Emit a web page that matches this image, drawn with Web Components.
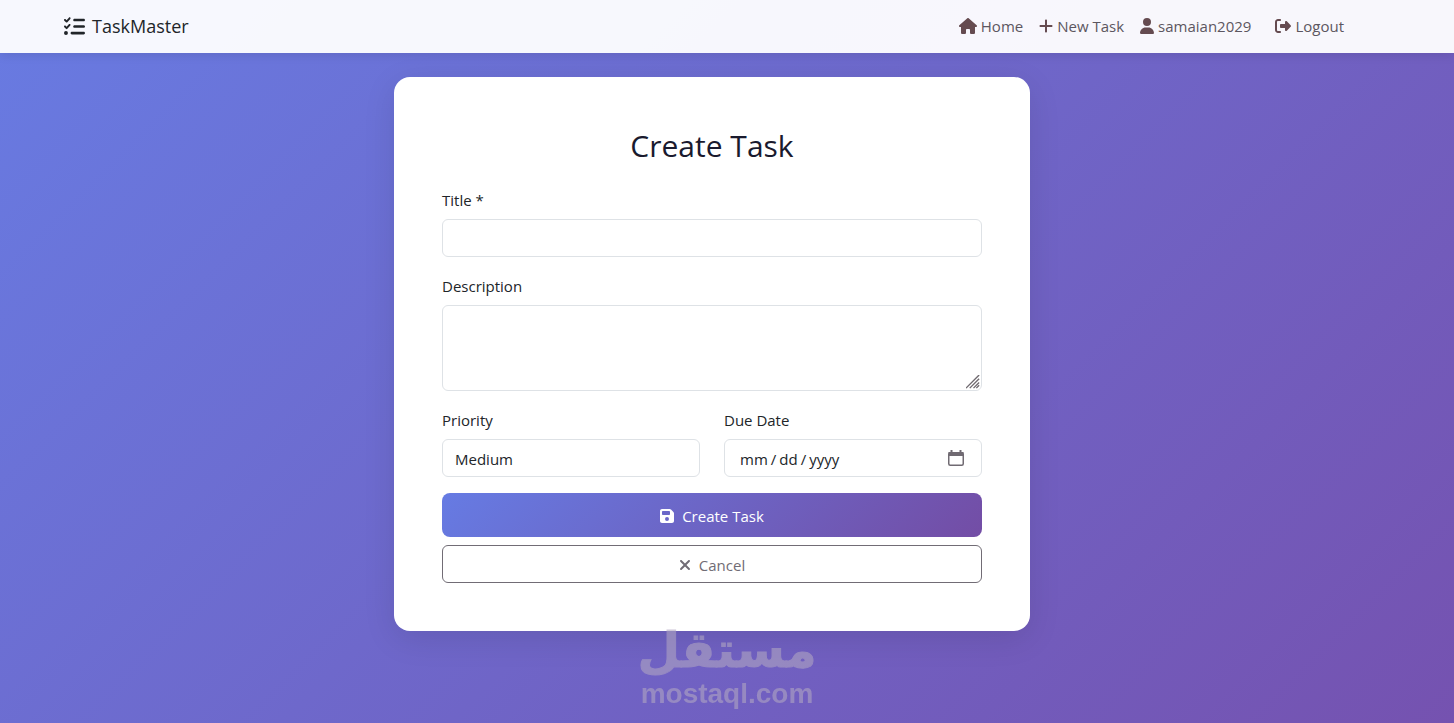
<!DOCTYPE html>
<html lang="en">
<head>
  <meta charset="utf-8">
  <meta name="viewport" content="width=device-width, initial-scale=1">
  <title>Create Task - TaskMaster</title>
  <style>
    body {
      margin: 0;
      min-height: 100vh;
      background: linear-gradient(135deg, #687be2 0%, #7552b0 100%) fixed;
      font-family: "Open Sans", "Noto Sans", sans-serif;
      font-size: 15px;
      line-height: 24px;
      color: #212529;
    }
    main {
      padding: 24px 42px 24px 12px;
    }
  </style>
</head>
<body>
  <site-navbar>
    <nav-link icon="house" href="#home">Home</nav-link>
    <nav-link icon="plus" href="#new">New Task</nav-link>
    <nav-link icon="user" href="#profile">samaian2029</nav-link>
    <nav-link icon="logout" href="#logout" style="margin-left: 8px">Logout</nav-link>
  </site-navbar>
  <main>
    <task-card heading="Create Task">
      <task-form></task-form>
    </task-card>
  </main>
  <mostaql-mark></mostaql-mark>

  <script>
    const ICONS = {
      house: [576, "M575.8 255.5c0 18-15 32.1-32 32.1h-32l.7 160.2c0 2.7-.2 5.4-.5 8.1V472c0 22.1-17.9 40-40 40H456c-1.1 0-2.2 0-3.3-.1c-1.4 .1-2.8 .1-4.2 .1H416 392c-22.1 0-40-17.9-40-40V448 384c0-17.7-14.3-32-32-32H256c-17.7 0-32 14.3-32 32v64 24c0 22.1-17.9 40-40 40H160 128.1c-1.5 0-3-.1-4.5-.2c-1.2 .1-2.4 .2-3.6 .2H104c-22.1 0-40-17.9-40-40V360c0-.9 0-1.9 .1-2.8V287.6H32c-18 0-32-14-32-32.1c0-9 3-17 10-24L266.4 8c7-7 15-8 22-8s15 2 21 7L564.8 231.5c8 7 12 15 11 24z"],
      plus: [448, "M256 80c0-17.7-14.3-32-32-32s-32 14.3-32 32V224H48c-17.7 0-32 14.3-32 32s14.3 32 32 32H192V432c0 17.7 14.3 32 32 32s32-14.3 32-32V288H400c17.7 0 32-14.3 32-32s-14.3-32-32-32H256V80z"],
      user: [448, "M224 256A128 128 0 1 0 224 0a128 128 0 1 0 0 256zm-45.7 48C79.8 304 0 383.8 0 482.3C0 498.7 13.3 512 29.7 512H418.3c16.4 0 29.7-13.3 29.7-29.7C448 383.8 368.2 304 269.7 304H178.3z"],
      logout: [512, "M377.9 105.9L500.7 228.7c7.2 7.2 11.3 17.1 11.3 27.3s-4.1 20.1-11.3 27.3L377.9 406.1c-6.4 6.4-15 9.9-24 9.9c-18.7 0-33.9-15.2-33.9-33.9l0-62.1-128 0c-17.7 0-32-14.3-32-32l0-64c0-17.7 14.3-32 32-32l128 0 0-62.1c0-18.7 15.2-33.9 33.9-33.9c9 0 17.6 3.6 24 9.9zM160 96L96 96c-17.7 0-32 14.3-32 32l0 256c0 17.7 14.3 32 32 32l64 0c17.7 0 32 14.3 32 32s-14.3 32-32 32l-64 0c-53 0-96-43-96-96L0 128C0 75 43 32 96 32l64 0c17.7 0 32 14.3 32 32s-14.3 32-32 32z"],
      save: [448, "M64 32C28.7 32 0 60.7 0 96V416c0 35.3 28.7 64 64 64H384c35.3 0 64-28.7 64-64V173.3c0-17-6.7-33.3-18.7-45.3L352 50.7C340 38.7 323.7 32 306.7 32H64zm0 96c0-17.7 14.3-32 32-32H288c17.7 0 32 14.3 32 32v64c0 17.7-14.3 32-32 32H96c-17.7 0-32-14.3-32-32V128zM224 288a64 64 0 1 1 0 128 64 64 0 1 1 0-128z"],
      times: [384, "M342.6 150.6c12.5-12.5 12.5-32.8 0-45.3s-32.8-12.5-45.3 0L192 210.7 86.6 105.4c-12.5-12.5-32.8-12.5-45.3 0s-12.5 32.8 0 45.3L146.7 256 41.4 361.4c-12.5 12.5-12.5 32.8 0 45.3s32.8 12.5 45.3 0L192 301.3 297.4 406.6c12.5 12.5 32.8 12.5 45.3 0s12.5-32.8 0-45.3L237.3 256 342.6 150.6z"],
      tasks: [512, "M152.1 38.2c9.9 8.9 10.7 24 1.8 33.9l-72 80c-4.4 4.9-10.6 7.8-17.2 7.9s-12.9-2.4-17.6-7L7 113C-2.3 103.6-2.3 88.4 7 79s24.6-9.4 33.9 0l22.1 22.1 55.1-61.2c8.9-9.9 24-10.7 33.9-1.8zm0 160c9.9 8.9 10.7 24 1.8 33.9l-72 80c-4.4 4.9-10.6 7.8-17.2 7.9s-12.9-2.4-17.6-7L7 273c-9.4-9.4-9.4-24.6 0-33.9s24.6-9.4 33.9 0l22.1 22.1 55.1-61.2c8.9-9.9 24-10.7 33.9-1.8zM224 96c0-17.7 14.3-32 32-32H480c17.7 0 32 14.3 32 32s-14.3 32-32 32H256c-17.7 0-32-14.3-32-32zm0 160c0-17.7 14.3-32 32-32H480c17.7 0 32 14.3 32 32s-14.3 32-32 32H256c-17.7 0-32-14.3-32-32zM160 416c0-17.7 14.3-32 32-32H480c17.7 0 32 14.3 32 32s-14.3 32-32 32H192c-17.7 0-32-14.3-32-32zM48 368a48 48 0 1 1 0 96 48 48 0 1 1 0-96z"]
    };

    class FaIcon extends HTMLElement {
      connectedCallback() {
        const [width, path] = ICONS[this.getAttribute("name")];
        const shadow = this.attachShadow({ mode: "open" });
        shadow.innerHTML = `
          <style>
            :host {
              display: inline-flex;
              flex: none;
            }
            svg {
              display: block;
              height: var(--icon-size, 16px);
              fill: currentColor;
            }
          </style>
          <svg viewBox="0 0 ${width} 512" aria-hidden="true"><path d="${path}"/></svg>
        `;
      }
    }

    class NavLink extends HTMLElement {
      connectedCallback() {
        const shadow = this.attachShadow({ mode: "open" });
        shadow.innerHTML = `
          <style>
            :host {
              display: block;
            }
            a {
              display: flex;
              align-items: center;
              gap: 4px;
              padding: 6px 8px;
              color: #5c5660;
              text-decoration: none;
            }
            fa-icon {
              color: #654b50;
            }
          </style>
          <a href="${this.getAttribute("href")}">
            <fa-icon name="${this.getAttribute("icon")}"></fa-icon>
            <slot></slot>
          </a>
        `;
      }
    }

    class SiteNavbar extends HTMLElement {
      connectedCallback() {
        const shadow = this.attachShadow({ mode: "open" });
        shadow.innerHTML = `
          <style>
            :host {
              display: block;
              padding: 8px 30px 9px 0;
              background: rgba(255, 255, 255, 0.95);
              box-shadow: 0 2px 10px rgba(0, 0, 0, 0.1);
            }
            nav {
              display: flex;
              align-items: center;
              justify-content: space-between;
              max-width: 1296px;
              margin: 0 auto;
            }
            .brand {
              --icon-size: 21px;
              display: flex;
              align-items: center;
              gap: 7px;
              font-size: 18px;
              color: #212529;
              text-decoration: none;
            }
            .links {
              display: flex;
              padding-right: 8px;
            }
          </style>
          <nav>
            <a class="brand" href="#"><fa-icon name="tasks"></fa-icon>TaskMaster</a>
            <div class="links"><slot></slot></div>
          </nav>
        `;
      }
    }

    class TaskCard extends HTMLElement {
      connectedCallback() {
        const shadow = this.attachShadow({ mode: "open" });
        shadow.innerHTML = `
          <style>
            :host {
              display: block;
              box-sizing: border-box;
              max-width: 636px;
              margin: 0 auto;
              padding: 48px;
              border-radius: 16px;
              background: #fff;
              box-shadow: 0 8px 32px rgba(0, 0, 0, 0.1);
            }
            h2 {
              margin: 0 0 20px;
              font-size: 30px;
              font-weight: 400;
              line-height: 42px;
              text-align: center;
              color: #1a1a2e;
            }
          </style>
          <h2>${this.getAttribute("heading")}</h2>
          <slot></slot>
        `;
      }
    }

    class TaskForm extends HTMLElement {
      connectedCallback() {
        const shadow = this.attachShadow({ mode: "open" });
        shadow.innerHTML = `
          <style>
            :host {
              display: block;
            }
            form {
              display: grid;
              grid-template-columns: 1fr 1fr;
              gap: 16px 24px;
            }
            .field {
              display: grid;
              gap: 6px;
            }
            .actions {
              display: grid;
              gap: 8px;
            }
            .wide {
              grid-column: 1 / -1;
            }
            label {
              line-height: 26px;
            }
            input,
            select,
            textarea {
              box-sizing: border-box;
              display: block;
              width: 100%;
              height: 38px;
              margin: 0;
              padding: 7px 12px 5px;
              border: 1px solid #dee2e6;
              border-radius: 6px;
              background: #fff;
              color: inherit;
              font: inherit;
              appearance: none;
            }
            textarea {
              height: 86px;
              resize: vertical;
            }
            textarea::-webkit-resizer {
              background: url("data:image/svg+xml,%3Csvg xmlns='http://www.w3.org/2000/svg' viewBox='0 0 16 16'%3E%3Cpath d='M0 14 14 0M4 14 14 4M8 14l6-6M11 14l3-3' stroke='%23706a70' stroke-width='1.500'/%3E%3C/svg%3E") right bottom / contain no-repeat;
            }
            input[type="date"] {
              padding: 7px 15px 5px 14px;
            }
            ::-webkit-datetime-edit-fields-wrapper,
            ::-webkit-datetime-edit {
              padding: 0;
            }
            ::-webkit-datetime-edit-text {
              padding: 0 2px;
            }
            ::-webkit-calendar-picker-indicator {
              width: 20px;
              height: 20px;
              margin: 0;
              padding: 0;
              background: url("data:image/svg+xml,%3Csvg xmlns='http://www.w3.org/2000/svg' viewBox='0 0 20 20'%3E%3Cg fill='none' stroke='%23706a72'%3E%3Cpath d='M5.500 1v3M14.500 1v3' stroke-width='2'/%3E%3Crect x='2.750' y='3.750' width='14.500' height='12.500' rx='1.500' stroke-width='1.500'/%3E%3Cpath d='M2.500 5h15' stroke-width='4'/%3E%3C/g%3E%3C/svg%3E") center / 20px no-repeat;
            }
            button {
              display: flex;
              align-items: center;
              justify-content: center;
              gap: 8px;
              padding: 7px 12px 5px;
              border: 1px solid #716c75;
              border-radius: 6px;
              background: transparent;
              color: #716c75;
              font: inherit;
            }
            .primary {
              padding: 11px 24px 9px;
              border: 0;
              border-radius: 8px;
              background: linear-gradient(135deg, #667be3 0%, #734da5 100%);
              color: #fff;
            }
          </style>
          <form>
            <div class="field wide">
              <label for="title">Title *</label>
              <input id="title" type="text" required>
            </div>
            <div class="field wide">
              <label for="description">Description</label>
              <textarea id="description"></textarea>
            </div>
            <div class="field">
              <label for="priority">Priority</label>
              <select id="priority">
                <option>Low</option>
                <option selected>Medium</option>
                <option>High</option>
              </select>
            </div>
            <div class="field">
              <label for="due">Due Date</label>
              <input id="due" type="date">
            </div>
            <div class="actions wide">
              <button class="primary" type="submit"><fa-icon name="save"></fa-icon>Create Task</button>
              <button type="button"><fa-icon name="times"></fa-icon>Cancel</button>
            </div>
          </form>
        `;
      }
    }

    // watermark, floats over the bottom edge of the page
    class MostaqlMark extends HTMLElement {
      connectedCallback() {
        const shadow = this.attachShadow({ mode: "open" });
        shadow.innerHTML = `
          <style>
            :host {
              position: fixed;
              bottom: 12px;
              left: 50%;
              display: grid;
              justify-items: center;
              transform: translateX(-50%);
              color: #b0a5c2;
              opacity: 0.6;
              pointer-events: none;
              font-weight: 700;
              text-align: center;
            }
            .arabic {
              font-family: "DejaVu Sans", sans-serif;
              font-size: 49px;
              line-height: 52px;
              -webkit-text-stroke: 1px currentColor;
            }
            .latin {
              font-family: "Liberation Sans", sans-serif;
              font-size: 28px;
              line-height: 34px;
            }
          </style>
          <span class="arabic" lang="ar" dir="rtl">مستقل</span>
          <span class="latin">mostaql.com</span>
        `;
      }
    }

    customElements.define("fa-icon", FaIcon);
    customElements.define("nav-link", NavLink);
    customElements.define("site-navbar", SiteNavbar);
    customElements.define("task-card", TaskCard);
    customElements.define("task-form", TaskForm);
    customElements.define("mostaql-mark", MostaqlMark);
  </script>
</body>
</html>
